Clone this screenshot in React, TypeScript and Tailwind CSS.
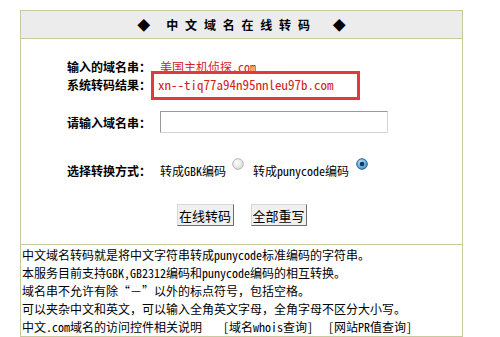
import React from "react";

const FONT =
  "font-[family-name:'Noto_Sans_Mono_CJK_SC','Noto_Sans_CJK_SC',sans-serif]";

function RadioOff() {
  return (
    <svg width="12" height="12" viewBox="0 0 12 12" className="block">
      <defs>
        <radialGradient id="roff" cx="0.4" cy="0.35" r="0.7">
          <stop offset="0" stopColor="#ffffff" />
          <stop offset="1" stopColor="#d8d8d8" />
        </radialGradient>
      </defs>
      <circle cx="6" cy="6" r="5.3" fill="url(#roff)" stroke="#b4b4b4" strokeWidth="1" />
    </svg>
  );
}

function RadioOn() {
  return (
    <svg width="12" height="12" viewBox="0 0 12 12" className="block">
      <defs>
        <radialGradient id="ron" cx="0.4" cy="0.35" r="0.7">
          <stop offset="0" stopColor="#bfe3fb" />
          <stop offset="1" stopColor="#3d8cc8" />
        </radialGradient>
      </defs>
      <circle cx="6" cy="6" r="5.3" fill="url(#ron)" stroke="#2a5f8f" strokeWidth="1" />
      <circle cx="6" cy="6" r="2.3" fill="#14385c" />
    </svg>
  );
}

export default function App() {
  return (
    <div className={`${FONT} w-[500px] h-[337px] bg-white text-[12px] text-black pt-[10px] pl-[20px]`}>
      <div className="w-[443px] border border-[#c9c9a0]">
        {/* header */}
        <div className="h-[28px] bg-[#ececec] border-b border-[#c9c9a0] flex items-center justify-center font-bold leading-none">
          <span className="text-[13px]">◆</span>
          <span className="ml-[16px] tracking-[6.8px]">中文域名在线转码</span>
          <span className="ml-[16px] text-[13px]">◆</span>
        </div>

        {/* body */}
        <div className="pt-[19px] pb-[18px] pl-[46px] border-b border-[#c9c9a0]">
          <div className="grid grid-cols-[84px_1fr] leading-[18px]">
            <div className="font-bold whitespace-nowrap">输入的域名串：</div>
            <div className="pl-[9px] text-[#d22222] whitespace-nowrap">美国主机侦探.com</div>
            <div className="font-bold whitespace-nowrap">系统转码结果：</div>
            <div className="relative pl-[7px] text-[13px] text-[#d22222] whitespace-nowrap">
              xn--tiq77a94n95nnleu97b.com
              <span className="absolute left-0 top-[-5px] w-[209px] h-[29px] border-[3px] border-[#e03a3a]" />
            </div>
          </div>

          <div className="mt-[17px] grid grid-cols-[84px_1fr] h-[22px] items-center">
            <div className="font-bold whitespace-nowrap mt-[2px]">请输入域名串：</div>
            <div className="ml-[9px] w-[228px] h-[22px] bg-white border border-t-[#9a9a9a] border-l-[#9a9a9a] border-r-[#d4d4d4] border-b-[#d4d4d4]" />
          </div>

          <div className="mt-[29px] grid grid-cols-[84px_1fr] leading-[18px]">
            <div className="font-bold whitespace-nowrap">选择转换方式：</div>
            <div className="pl-[9px] flex items-center whitespace-nowrap">
              <span>转成GBK编码</span>
              <span className="ml-[6px] mt-[-15px]">
                <RadioOff />
              </span>
              <span className="ml-[9px]">转成punycode编码</span>
              <span className="ml-[7px] mt-[-15px]">
                <RadioOn />
              </span>
            </div>
          </div>

          <div className="mt-[24px] flex justify-center gap-[17px] pr-[46px]">
            <button className="w-[57px] h-[22px] bg-[#f0f0f0] border border-t-[#d8d8d8] border-l-[#d8d8d8] border-r-[#6e6e6e] border-b-[#6e6e6e] text-[13px] leading-none text-black font-[family-name:'Noto_Sans_CJK_SC',sans-serif]">
              在线转码
            </button>
            <button className="w-[56px] h-[22px] bg-[#f0f0f0] border border-t-[#d8d8d8] border-l-[#d8d8d8] border-r-[#6e6e6e] border-b-[#6e6e6e] text-[13px] leading-none text-black font-[family-name:'Noto_Sans_CJK_SC',sans-serif]">
              全部重写
            </button>
          </div>
        </div>

        {/* footer */}
        <div className="pt-[1px] pl-[1px] leading-[18px]">
          <div>中文域名转码就是将中文字符串转成punycode标准编码的字符串。</div>
          <div>本服务目前支持GBK,GB2312编码和punycode编码的相互转换。</div>
          <div>域名串不允许有除“－”以外的标点符号，包括空格。</div>
          <div>可以夹杂中文和英文，可以输入全角英文字母，全角字母不区分大小写。</div>
          <div className="whitespace-nowrap">
            <span>中文.com域名的访问控件相关说明</span>
            <span className="ml-[21px]">[域名whois查询]</span>
            <span className="ml-[15px]">[网站PR值查询]</span>
          </div>
        </div>
      </div>
    </div>
  );
}
